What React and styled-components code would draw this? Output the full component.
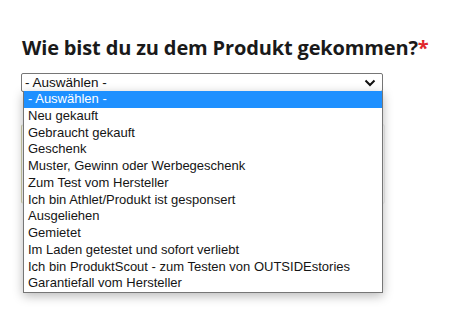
import React from 'react'
import styled, { createGlobalStyle } from 'styled-components'

const options = [
  '- Auswählen -',
  'Neu gekauft',
  'Gebraucht gekauft',
  'Geschenk',
  'Muster, Gewinn oder Werbegeschenk',
  'Zum Test vom Hersteller',
  'Ich bin Athlet/Produkt ist gesponsert',
  'Ausgeliehen',
  'Gemietet',
  'Im Laden getestet und sofort verliebt',
  'Ich bin ProduktScout - zum Testen von OUTSIDEstories',
  'Garantiefall vom Hersteller',
]

const App = () => {
  const selected = 0
  return (
    <>
      <GlobalStyle />
      <Page>
        <Question>
          Wie bist du zu dem Produkt gekommen?<Required>*</Required>
        </Question>
        <SelectWrap>
          <SelectBox>
            <span>{options[selected]}</span>
            <Chevron viewBox="0 0 12 8">
              <path d="M1.5 1.5 L6 6 L10.5 1.5" />
            </Chevron>
          </SelectBox>
          <DropList>
            {options.map((o, i) => (
              <Option key={o} active={i === selected}>{o}</Option>
            ))}
          </DropList>
        </SelectWrap>
        <HiddenField />
      </Page>
    </>
  )
}

const GlobalStyle = createGlobalStyle`
  body {
    margin: 0;
    background: #fff;
  }
`

const Page = styled.div`
  width: 453px;
  height: 313px;
  padding: 35px 0 0 21px;
  box-sizing: border-box;
  overflow: hidden;
`

const Question = styled.h2`
  margin: 0 0 12px 1px;
  font-family: "Open Sans", "DejaVu Sans", sans-serif;
  font-size: 20px;
  font-weight: 700;
  line-height: 26px;
  color: #1a1a1a;
  letter-spacing: -0.15px;
`

const Required = styled.span`
  color: #e0262b;
`

const SelectWrap = styled.div`
  position: relative;
  width: 362px;
`

const SelectBox = styled.div`
  display: flex;
  align-items: center;
  justify-content: space-between;
  height: 17px;
  padding: 0 6px 0 3px;
  border: 1px solid #767676;
  border-radius: 2px;
  background: #fff;
  font-family: "Liberation Sans", Arial, sans-serif;
  font-size: 13.5px;
  color: #111;
`

const Chevron = styled.svg`
  width: 12px;
  height: 8px;
  fill: none;
  stroke: #111;
  stroke-width: 2;
`

const DropList = styled.div`
  position: absolute;
  top: 18px;
  left: 2px;
  right: 0;
  z-index: 2;
  border: 1px solid #767676;
  border-top: none;
  background: #fff;
  box-shadow: 0 3px 10px rgba(0, 0, 0, 0.28);
`

const Option = styled.div`
  height: 16.75px;
  line-height: 16.75px;
  padding-left: 4px;
  font-family: "Liberation Sans", Arial, sans-serif;
  font-size: 13px;
  white-space: nowrap;
  background: ${p => (p.active ? '#1e90ff' : 'transparent')};
  color: ${p => (p.active ? '#fff' : '#151515')};
`

const HiddenField = styled.div`
  margin-top: 32px;
  width: 362px;
  height: 78px;
  border: 1px solid #f0f0f0;
  border-left-color: #cfcfa8;
  border-radius: 3px;
`

export default App
